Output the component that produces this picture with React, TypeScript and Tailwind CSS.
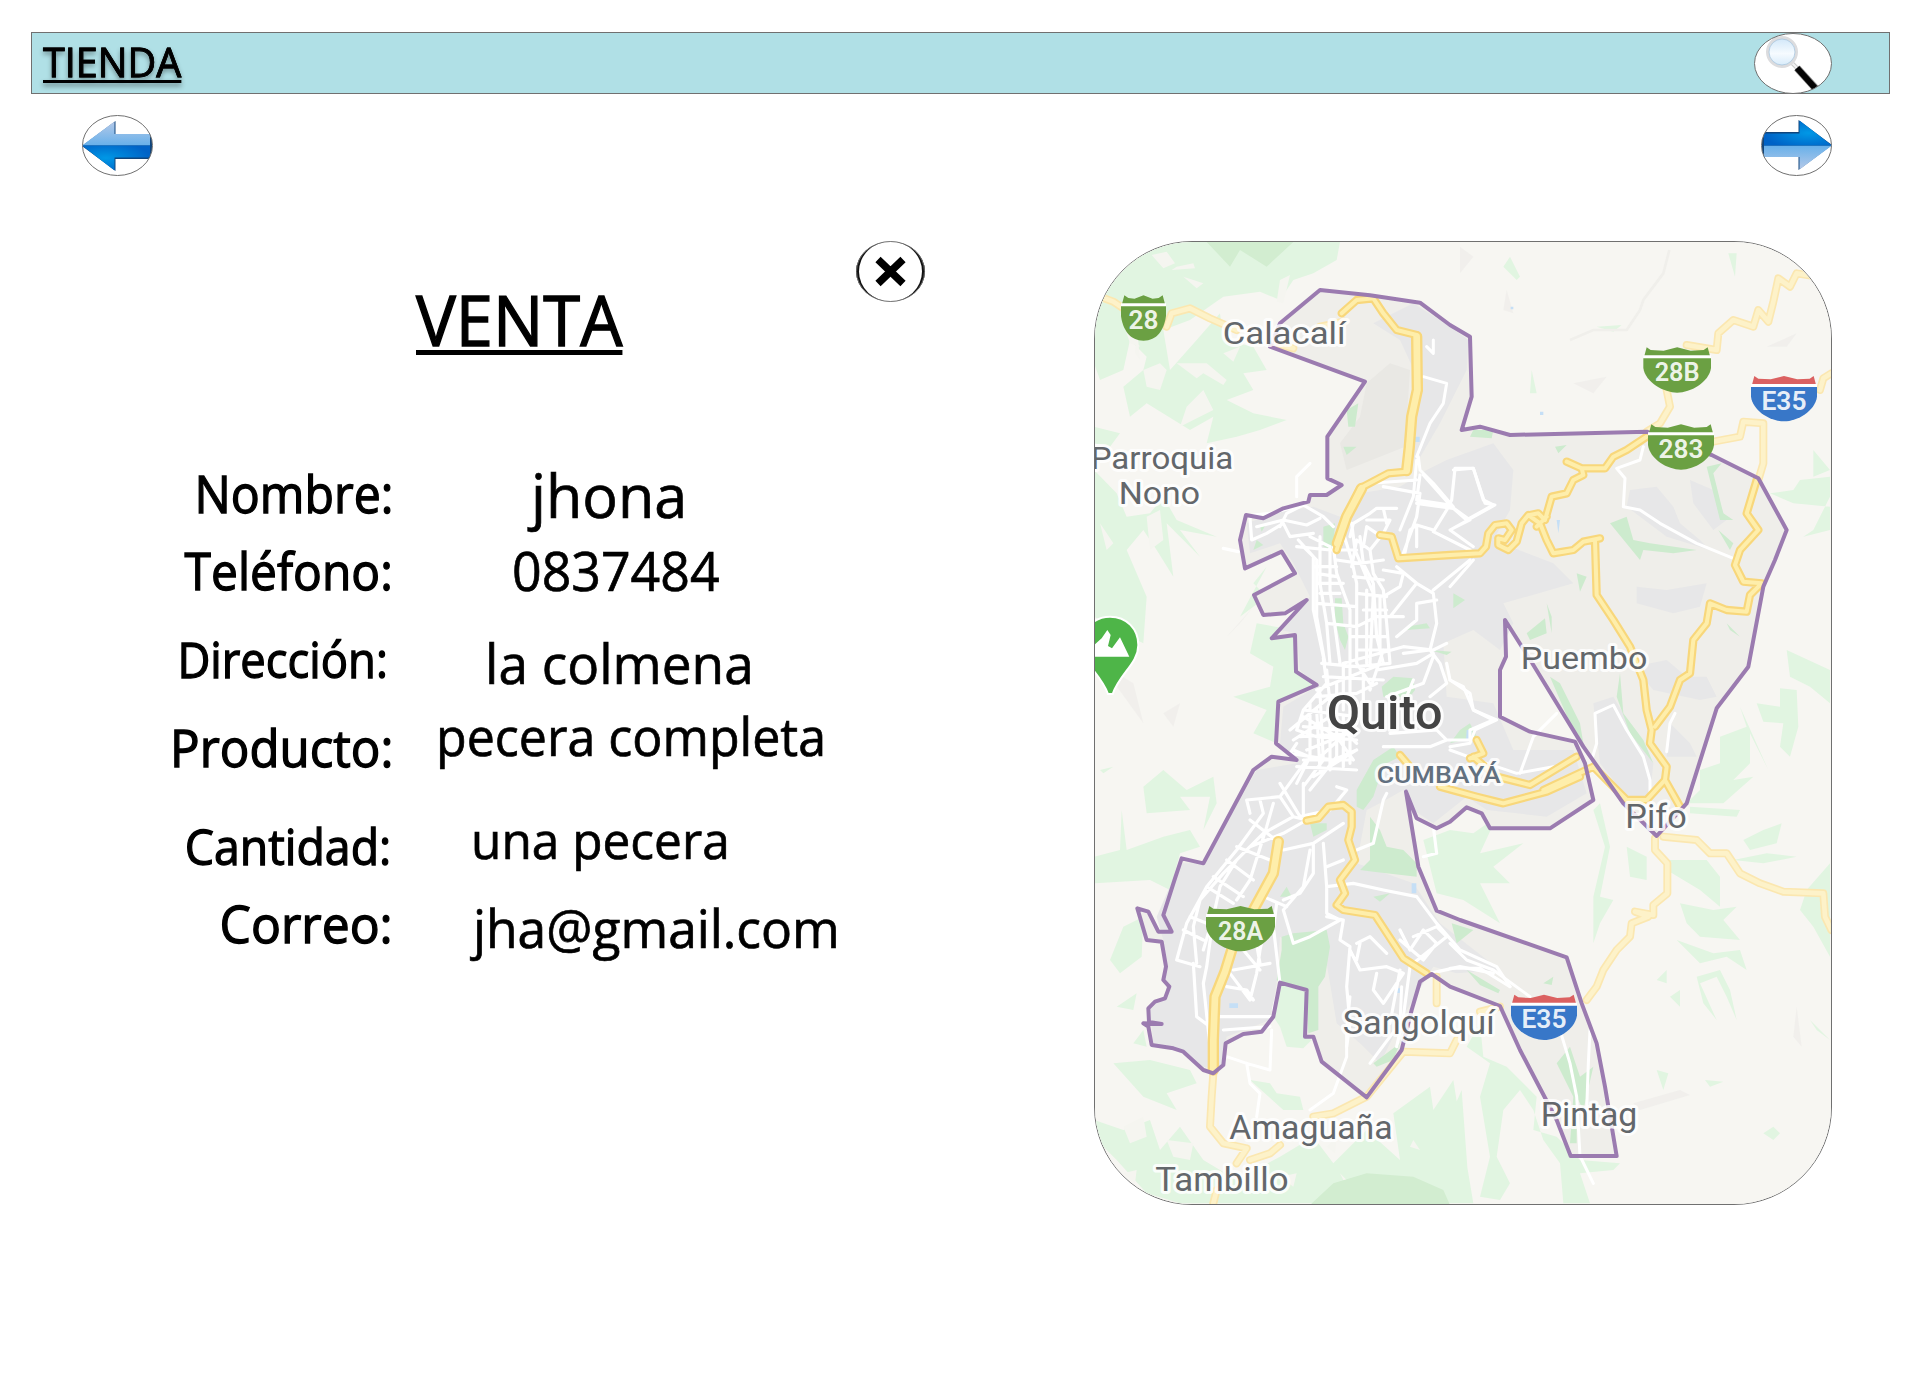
const BOUNDARY =
  'M600 280L720 180L870 196L1020 218L1110 285L1170 320L1175 500L1145 600L1200 590L1290 615L1700 605L1895 675L2035 745L2120 900L2085 990L2050 1070L2005 1310L1910 1435L1820 1720L1730 1818L1630 1720L1510 1550L1360 1305L1275 1170L1278 1280L1260 1320L1260 1460L1350 1505L1485 1535L1515 1600L1540 1710L1410 1795L1230 1795L1205 1750L1160 1732L1110 1775L1070 1795L1010 1765L978 1685L1015 1910L1070 2042L1140 2070L1460 2182L1505 2320L1550 2440L1575 2570L1610 2778L1472 2778L1430 2670L1320 2460L1260 2328L1110 2270L1055 2232L1020 2255L995 2340L965 2460L860 2602L725 2495L700 2420L675 2420L680 2280L600 2258L580 2360L545 2405L490 2412L437 2440L430 2505L400 2530L370 2520L310 2465L280 2455L215 2445L205 2390L190 2380L245 2382L207 2376L205 2335L225 2315L255 2305L268 2270L250 2250L258 2210L245 2135L200 2130L172 2035L205 2045L235 2105L275 2105L250 2055L285 1945L305 1885L370 1900L520 1620L575 1580L650 1590L588 1540L595 1415L710 1365L648 1325L645 1215L575 1225L680 1110L615 1150L550 1155L522 1095L645 1030L605 965L495 1015L480 930L498 855L550 865L610 835L685 815L690 795L740 795L785 765L742 745L742 620L855 455L570 350Z';

const OUTER_GREEN = [
  // north-west hills
  'M130 90L210 60L300 36L640 36L780 36L770 90L700 130L640 150L600 210L540 185L430 200L330 270L250 300L270 420L350 330L420 250L430 330L520 350L560 420L490 430L520 480L440 510L520 550L620 570L540 600L470 620L380 640L400 560L330 600L200 520L150 560L130 470L190 420L200 380L150 330L130 420L60 450L42 400L42 230Z',
  'M42 590L120 610L90 650L42 640Z',
  'M42 720L110 790L140 860L210 850L250 800L290 870L410 920L300 900L360 980L260 880L280 1040L230 960L190 900L140 960L200 1100L190 1240L110 1200L42 1160Z',
  'M520 1060L560 1100L480 1160L560 1010Z',
  'M530 1180L640 1200L660 1320L700 1370L590 1430L590 1540L520 1510L560 1440L460 1400L570 1370L580 1310L510 1270Z',
  'M60 1620L100 1610L70 1630Z',
  'M190 1670L250 1620L320 1680L400 1640L410 1720L370 1800L390 1700L300 1700L330 1740L200 1750Z',
  'M42 1880L120 1860L125 1740L140 1860L250 1820L330 1800L360 1850L300 1870L270 1980L210 1950L42 1960Z',
  'M130 2090L190 2060L185 2180L120 2230L90 2190Z',
  'M110 2330L170 2290L160 2340Z M160 2440L190 2400L200 2450Z',
  'M42 2670L130 2700L210 2670L240 2760L300 2690L370 2790L470 2850L600 2780L700 2720L760 2800L860 2700L960 2790L940 2650L1050 2570L1060 2640L1120 2550L1150 2740L1180 2920L300 2920L200 2890L110 2790L60 2740Z',
  'M100 2500L210 2490L330 2520L350 2560L260 2590L290 2640L190 2600Z',
  'M510 2550L570 2560L590 2590L660 2600L670 2640L610 2640Z',
  // north-east
  'M1290 80L1320 140L1310 150L1270 110Z M1945 70L1970 70L1965 140Z M1550 290L1625 285L1600 305Z M1355 420L1370 490L1350 490Z',
  'M1130 500L1150 480L1155 530Z',
  'M2200 660L2250 720L2200 740Z M2070 790L2140 780L2160 750L2250 740L2250 800L2200 900L2170 920L2250 900L2250 830L2140 820Z',
  // east
  'M2120 1260L2250 1320L2250 1420L2190 1370L2130 1340Z M2030 1420L2100 1430L2100 1375L2150 1380L2155 1490L2130 1580L2100 1550L2110 1480L2050 1475Z',
  'M1920 1520L2000 1490L1980 1430L2065 1620L2010 1510L2010 1560L2010 1600L1960 1650L2020 1640L1930 1720L1820 1720L1860 1680L1860 1620L1920 1600Z M1990 1830L2050 1800L2105 1780L2090 1840L2010 1860Z M1960 1890L2060 1870L2150 1880L2050 1900Z M1830 1730L1980 1740L1970 1760L1830 1750Z',
  'M1770 1890L1880 1890L1920 1940L1920 2030L1860 1980L1760 1920Z M1640 1850L1700 1880L1700 1950L1650 1940Z',
  'M2160 2040L2180 1980L2250 1900L2250 2180L2200 2090Z',
  'M1540 1740L1560 1720L1590 1850L1560 2000L1600 2010L1560 2080L1540 2140L1540 2000L1575 1850Z',
  'M1800 2020L1900 2040L1970 2030L1930 2070L1980 2130L1860 2120L1820 2080Z M1790 2130L1900 2170L1980 2160L2000 2220L1940 2180L1860 2200Z',
  'M1850 2240L1920 2220L1950 2280L1970 2370L1940 2300L1910 2240L1860 2260L1910 2370L1870 2320Z',
  'M1730 2250L1760 2220L1760 2260Z M1770 2300L1800 2280L1800 2330Z M1730 2520L1765 2530L1750 2580Z M1875 2550L1930 2555L1890 2570Z M2050 2710L2080 2690L2100 2710L2080 2730Z',
  'M2190 2370L2250 2430L2210 2400Z',
  // south centre
  'M1110 1800L1180 1810L1250 1760L1200 1870L1330 1840L1240 1910L1290 1960L1200 1960L1260 2080L1150 2010L1070 1990L1030 1830Z',
  'M1160 2450L1200 2380L1210 2480L1280 2510L1370 2600L1360 2700L1430 2720L1500 2790L1620 2800L1600 2820L1500 2830L1530 2920L1450 2920L1440 2800L1390 2730L1360 2640L1320 2580L1270 2640L1250 2780L1290 2860L1260 2910L1200 2900L1230 2780L1200 2600L1230 2500Z',
  'M1110 2660L1145 2580L1170 2920L1110 2900Z',
  'M605 2260L675 2285L675 2420L695 2430L670 2455L620 2450L600 2390L580 2360Z',
];

const CLEARINGS = [
  'M215 75L260 65L285 100L250 115ZM290 110L340 100L345 115L275 120ZM310 140L370 160L350 175ZM600 150L630 135L610 220L590 215ZM190 420L240 400L260 420L240 480L200 470ZM290 400L380 400L440 450L430 465L370 430L350 445ZM370 480L400 540L340 570L300 590L320 530ZM430 370L480 350L460 395ZM170 280L180 390L165 370ZM120 250L180 350L150 340Z',
  'M200 860L240 840L250 930L210 960ZM60 880L100 940L80 960ZM130 2690L190 2660L200 2720L150 2740ZM130 2830L170 2820L165 2860ZM260 2730L340 2740L330 2790L280 2780ZM780 2830L810 2860L790 2850ZM600 2840L650 2830L640 2870ZM1000 2730L1020 2760L990 2750ZM740 2750L770 2720L765 2770Z',
];

const INNER_GREEN = [
  'M605 2160L605 2120L640 2110L740 2100L750 2150L735 2240L715 2270L715 2400L685 2410L680 2280L600 2258L590 2250Z',
  'M880 1590L940 1550L960 1580L920 1600L900 1640L880 1700L850 1740L830 1730L830 1680Z',
  'M905 1370L940 1340L1000 1345L1005 1380L990 1400L910 1400Z',
  'M765 1105L785 1105L790 1180L805 1220L795 1260L780 1230L765 1170Z',
  'M730 890L765 880L760 960L730 950Z M800 540L835 520L825 590L805 590Z M790 650L830 650L800 675Z',
  'M1180 600L1240 600L1235 625L1170 620Z M1425 650L1460 645L1435 670Z M1590 880L1640 860L1660 930L1710 940L1850 960L1780 970L1690 960L1680 990Z',
  'M1880 710L1925 700L1900 730L1930 850L1960 870L1920 870Z M1915 900L1960 940L1950 960Z',
  'M1120 1090L1155 1110L1120 1135Z M1340 1210L1395 1165L1400 1210L1350 1230Z M1490 1030L1520 1040L1500 1085Z M1400 1120L1415 1160L1415 1210Z M1940 1180L1980 1220L1950 1200Z',
  'M1410 1340L1440 1360L1500 1480L1510 1540L1470 1480Z M1620 1330L1630 1450L1690 1530L1720 1600L1650 1510L1610 1400Z',
  'M980 1190L1040 1180L1050 1195L980 1200Z M1050 1260L1115 1265L1100 1275Z M1140 1500L1170 1480L1190 1520L1110 1540Z',
  'M870 1760L900 1800L920 1850L970 1860L1010 1900L1010 1940L880 1925L840 1920L870 1890Z M690 1780L740 1780L740 1800L700 1820Z',
  'M880 2000L930 1990L900 2015Z M1115 2080L1180 2100L1130 2140Z M1160 2220L1260 2280L1255 2290L1200 2265Z M1390 2260L1420 2240L1415 2265Z M1430 2500L1470 2450L1500 2540L1540 2510L1510 2640L1490 2600L1490 2740L1470 2740L1480 2600Z',
  'M880 2500L960 2440L940 2490L890 2510Z M600 2000L620 1970L635 2000Z M540 890L560 880L545 905Z M530 930L550 945L520 960Z',
];

const URBAN = [
  'M500 880L600 845L700 830L780 860L840 790L960 770L1040 720L1100 690L1240 640L1300 720L1290 840L1240 930L1420 1000L1480 1060L1270 1120L1300 1180L1260 1260L1180 1200L1090 1240L1100 1400L1240 1420L1300 1560L1480 1560L1520 1690L1400 1760L1220 1740L1160 1700L1060 1780L1000 1740L970 1680L900 1720L860 1740L830 1900L1000 1960L1080 2080L1260 2220L1130 2230L1060 2210L980 2340L900 2500L840 2440L770 2380L740 2200L600 2120L590 2260L570 2370L440 2420L420 2520L370 2510L300 2460L220 2440L210 2340L260 2290L250 2130L230 2060L300 1900L370 1900L530 1620L650 1600L600 1540L610 1430L710 1370L660 1320L650 1210L600 1200L690 1100L640 1000L600 940L510 970Z',
  'M1000 220L1110 290L1165 330L1160 420L1080 580L1010 700L980 640L990 540L1020 460L960 330L880 280Z',
  'M1650 780L1730 770L1780 830L1800 880L1860 930L1890 960L1760 920L1640 830Z M1830 750L1900 780L1940 870L1900 900L1840 820Z',
  'M1670 1070L1760 1080L1880 1060L1860 1130L1780 1150L1670 1120Z M1660 1310L1760 1290L1820 1340L1880 1340L1910 1400L1860 1410L1720 1380Z',
  'M1540 1420L1600 1400L1720 1600L1710 1700L1640 1700L1560 1600Z M1770 1480L1830 1540L1850 1580L1760 1580Z M1110 1000L1250 980L1260 1080L1130 1100Z',
];

// White street mesh, drawn in its own grid over the urban core.
const STREETS = [
  'M240 205L250 195L300 190L400 165L460 200L490 230M240 205L245 270L290 250L340 220L360 260L430 250M260 230L340 210L410 225L450 205M160 295L205 305M400 165L350 190L330 230',
  'M385 270L430 320L430 480L460 620M400 290L440 330L440 500L465 640M420 260L480 290L480 420L510 640M450 260L450 400L470 520L480 640M490 290L500 370L540 480L540 640M520 250L545 330L560 400L560 640M545 220L555 300L610 430L600 640M500 330L570 340L640 330M430 350L500 350M440 400L520 400M440 460L560 470M470 520L560 530L620 500L700 500M570 260L580 340L610 400L620 560L640 640',
  'M590 210L660 210L640 250L600 300L610 370L640 420L650 520L660 640M540 260L550 220L600 190L620 175L680 175M640 175L650 220M680 350L740 400L790 430L800 520L780 600L700 610M790 420L900 330M740 400L660 500M800 450L740 460L740 510L680 560M520 640L700 590L790 600L830 580',
  'M700 310L740 200L750 130L640 110M750 75L740 150L840 165L760 75M740 160L850 175L890 210L970 165L940 150L910 55L855 55L845 150L830 180L790 245L900 300M700 330L720 240L740 225L790 240M740 230L740 290M640 360L700 370L690 410L640 440M600 300L560 270L545 350M620 250L590 230L580 290',
  'M460 625L470 700L400 780L380 840L440 860L560 870M360 840L480 740M370 870L480 800L560 880M370 900L440 930L560 820M400 800L500 860L550 930M380 880L360 910L490 930L560 900M420 760L420 920L380 1000M450 730L460 930L400 1010M500 700L500 920L420 1020M540 650L540 940M580 650L580 820M380 950L560 960M400 780L560 800M440 720L640 640M460 680L640 690M640 600L600 720M620 660L740 640L790 610',
  'M780 600L810 640L830 700L780 740M830 640L840 690L900 730L910 780L970 810L900 840L900 870L830 870L780 890L640 890M650 740L760 700L790 620M710 740L730 690M660 850L800 840L830 870',
  'M240 1090L230 1050L330 1040L370 1100L410 1110M330 1040L410 930M330 1000L390 1100L480 1080L530 1020L500 1010M400 1000L400 1090M270 1050L280 1090L200 1200L110 1310L50 1420L20 1530L90 1550M410 1110L340 1150L240 1190L160 1270L90 1350L70 1430L80 1540M370 1100L280 1150L200 1230L150 1310L130 1400L110 1550L100 1600L120 1790M310 1060L290 1130L240 1290L200 1350M240 1110L330 1180M200 1190L300 1230M170 1230L250 1290M130 1280L220 1340M110 1310L190 1360M60 1400L110 1420M40 1440L100 1470',
  'M340 1200L430 1180L520 1120M420 1200L400 1310L340 1380L370 1480L420 1460L510 1410L470 1390L470 1310L460 1180M430 1180L430 1270L390 1330L340 1350M470 1310L550 1300L640 1320L740 1340M470 1250L520 1230M470 1400L520 1410L510 1470L540 1490L530 1610L540 1720L530 1790M560 1480L600 1460L650 1510M540 1500L570 1560L650 1550L700 1570L640 1660L610 1620L620 1570M570 1480L560 1530',
  'M690 1440L720 1500L760 1440L800 1480L760 1530L690 1470M730 1460L800 1430L830 1460L730 1540M720 1550L700 1700L680 1790M690 1560L660 1720M740 1340L800 1420L870 1500L980 1550L1020 1610M780 1570L870 1550L970 1570M640 1050L610 1180L560 1200M650 1030L640 1050M790 1130L800 1210L760 1220',
  'M180 1570L240 1650L260 1570L270 1500L290 1410L310 1430L330 1600L310 1680M170 1610L230 1620L250 1650M220 1500L270 1560M150 1700L310 1700M160 1740L300 1730M190 1560L300 1540M130 1400L100 1500M70 1540L80 1700L120 1730M250 1430L270 1540M320 1360L310 1440M280 1340L350 1370',
  'M455 640L560 650L660 640M470 660L480 760M520 640L520 780M560 640L600 700M440 740L560 730L620 700M400 830L520 840M390 860L560 850M410 900L560 840M440 780L450 960M480 780L480 960M520 800L520 950M400 930L540 930M430 980L560 900M380 290L480 300L560 300M440 370L500 380M450 430L510 430M550 380L640 390M560 430L650 440M580 480L650 480M540 560L650 560M560 600L660 600M590 420L590 640M630 440L630 600',
];

const LOCAL_ROADS = [
  'M1120 720L1180 715L1215 820L1245 825L1110 900M1115 830L1170 870L1110 900L1180 950',
  'M1690 650L1680 690L1610 715L1635 745L1630 830L1680 840L1740 880L1850 940L1960 985',
  'M1535 1590L1550 1540L1545 1450L1600 1425L1640 1500L1690 1580L1710 1650L1710 1710M1760 1565L1770 1480L1785 1450',
  'M1110 1350L1150 1370L1180 1440L1250 1470L1185 1500L1170 1540L1110 1550M1320 1630L1360 1520L1430 1450M1250 1610L1310 1630L1420 1610M1110 1560L1220 1600L1200 1630',
  'M1015 680L1020 720L1060 760L1120 830M1030 440L1100 460L1090 520L1050 580L1010 680M1010 690L1000 800L960 900M870 760L1010 750M1040 350L1060 370L1060 330M650 800L650 740L690 700M1110 1070L1180 990',
  'M1110 2140L1160 2190L1240 2220L1350 2300M1110 2215L1200 2215L1290 2270M1440 2400L1470 2500L1490 2600L1500 2778L1540 2860M1530 2400L1525 2500L1520 2640',
  'M440 2480L500 2500L570 2520L575 2400M500 2500L510 2560L540 2590L530 2660M690 2640L760 2590L800 2480L800 2400L810 2300M870 2500L900 2460L960 2380L965 2270',
];

const HIGHWAYS = [
  'M785 250L830 210L880 205L910 250L950 300L1010 315L1015 480L995 560L985 650L980 725L925 730L840 775L800 860L770 960',
  'M900 915L935 920L955 985L1110 975L1200 970L1218 950L1225 910L1245 885L1280 880L1295 900L1275 930L1255 925L1255 945L1285 960L1310 935L1325 880L1345 855L1380 880L1400 930L1420 970L1450 965L1480 960L1510 935L1560 925',
  'M1350 855L1375 850L1395 870L1415 800L1460 790L1480 750L1510 735L1505 715L1460 695M1370 890L1400 860M1505 715L1575 715L1600 680L1640 660L1700 620',
  'M1545 930L1550 1095L1600 1170L1650 1250L1690 1350L1700 1440L1715 1500L1710 1540L1760 1610L1755 1650L1800 1730',
  'M1755 1650L1700 1710L1640 1710L1540 1610M1725 1490L1770 1430L1800 1350L1830 1330L1840 1230L1880 1180L1890 1120L1940 1140L2000 1145L2010 1095L2045 1060L1990 1055L1965 1005L1980 960L2035 900L2000 850L2030 750',
  'M680 1772L715 1765L745 1730L790 1725L815 1745L815 1790L805 1830L825 1890L780 1950L795 1990L770 2025L790 2040L885 2055L970 2185L1040 2230',
  'M1190 1530L1210 1570L1170 1585M1080 1670L1190 1700L1270 1720L1400 1685L1500 1640M1180 1580L1250 1640L1350 1665L1490 1580M1390 1680L1540 1610',
  'M960 1575L990 1610',
];

const TRUNK_ROADS = ['M595 1835L580 1930L520 2040M455 2160L435 2225L405 2300L400 2430L400 2520', 'M1010 320L1012 480L995 560L988 650L980 722', 'M845 775L800 860L772 940'];

const PALE_ROADS = [
  'M60 200L100 215L130 235M260 290L275 250L330 235L390 265L470 300M600 345L640 355M720 290L790 275',
  'M1820 345L1910 360L1915 310L1960 270L2020 290L2035 240L2065 275L2080 215L2095 145L2130 170L2150 130L2210 140M2220 480L2230 445L2254 430M1700 605L1740 580L1770 530L1760 480M1900 635L1980 620L1990 575L2050 580L2050 700L2035 750',
  'M1700 1800L1725 1830M1660 1800L1660 1850L1700 1910M1700 1910L1760 1800M1660 1830L1655 1860L1665 1890L1667 1920L1665 1990L1610 2020',
];

const PALE_SOUTH = [
  'M1725 1825L1725 1860L1762 1900L1762 1990L1720 2025L1720 2055L1665 2045L1705 2060L1655 2080L1650 2120L1610 2160L1570 2220L1550 2270L1520 2310',
  'M1750 1820L1850 1830L1890 1870L1940 1870L1980 1930L2040 1960L2110 1985L2230 1990L2235 2060L2254 2100',
  'M400 2530L395 2600L390 2690L430 2740L500 2755L470 2800M510 2790L570 2770L600 2745M700 2660L760 2650L860 2600L970 2465L1110 2470L1130 2430M1070 2240L1070 2320M410 2880L400 2920M1260 2330L1200 2345',
];

const PALE = [PALE_ROADS[0], PALE_ROADS[1], ...PALE_SOUTH];

type MapText = { t: string; x: number; y: number; w: number; s: number; c?: string; k?: number };
const LABELS: MapText[] = [
  { t: 'Calacalí', x: 428, y: 342, w: 369, s: 96 },
  { t: 'Parroquia', x: 32, y: 716, w: 428, s: 96 },
  { t: 'Nono', x: 116, y: 821, w: 244, s: 96 },
  { t: 'Puembo', x: 1322, y: 1316, w: 380, s: 96 },
  { t: 'Pifo', x: 1636, y: 1795, w: 184, s: 98 },
  { t: 'Sangolquí', x: 788, y: 2411, w: 456, s: 97 },
  { t: 'Amaguaña', x: 448, y: 2728, w: 490, s: 97 },
  { t: 'Tambillo', x: 226, y: 2883, w: 400, s: 97 },
  { t: 'Pintag', x: 1382, y: 2687, w: 290, s: 97 },
  { t: 'CUMBAYÁ', x: 890, y: 1659, w: 372, s: 74, c: '#62707f', k: 500 },
  { t: 'Quito', x: 740, y: 1496, w: 348, s: 146, c: '#444444', k: 500 },
];

function Shield({ x, y, w, text, interstate }: { x: number; y: number; w: number; text: string; interstate?: boolean }) {
  const main = interstate ? '#3877c8' : '#6ba043';
  const top = interstate ? '#db6161' : '#6ba043';
  const m = w / 2;
  return (
    <g transform={`translate(${x} ${y})`}>
      <path d={`M10 0L22 8L${m * 0.6} 10L${m} 0L${m * 1.4} 10L${w - 22} 8L${w - 10} 0L${w - 3} 26H3Z`} fill={top} />
      <path d={`M0 24H${w}V34H0Z`} fill="#fff" />
      <path d={`M0 33H${w}V62C${w - 6} 105 ${m + 40} 136 ${m} 136C${m - 40} 136 6 105 0 62Z`} fill={main} />
      <text x={m} y="101" textAnchor="middle" fontSize="76" fontWeight="600" fill="#fff" fillOpacity=".9" className="font-['Roboto',sans-serif]" textLength={text.length * 45} lengthAdjust="spacingAndGlyphs">
        {text}
      </text>
    </g>
  );
}

function Lines({ paths, color, width }: { paths: string[]; color: string; width: number }) {
  return <path d={paths.join('')} fill="none" stroke={color} strokeWidth={width} strokeLinejoin="round" strokeLinecap="round" />;
}

function QuitoMap() {
  return (
    <svg viewBox="42 33 2214 2892" preserveAspectRatio="none" className="-m-px block h-[964px] w-[738px]">
      <rect x="42" y="33" width="2214" height="2892" fill="#f7f6f2" />
      <path d={OUTER_GREEN.join('')} fill="#e1f5e1" />
      <path d={CLEARINGS.join('')} fill="#f5f5f0" />
      <path d="M380 36H640L560 110L480 60L450 110ZM690 2925L760 2860L860 2830L1000 2840L1090 2880L1110 2925Z" fill="#d2edd0" />
      <path
        d="M1140 50L1180 80L1140 130ZM1280 180L1300 250L1270 240ZM1480 460L1540 490L1580 440L1530 450ZM2150 2330L2165 2450L2140 2420ZM1660 2620L1800 2580L1830 2595L1680 2640ZM2060 350L2150 310L2120 350ZM440 1220L520 1130L480 1180ZM250 1450L300 1420L280 1490ZM60 1300L190 1480L160 1360Z"
        fill="#eeedea"
        opacity=".7"
      />
      <path d="M1470 330L1540 300L1640 300L1680 240L1690 210L1750 130L1768 60" fill="none" stroke="#f0efeb" strokeWidth="8" />
      <path d={BOUNDARY} fill="#efeeea" />
      <path d="M860 460L930 400L990 420L975 650L900 680L800 720L780 640L840 560Z" fill="#e9e8e4" />
      <path d={URBAN.join('')} fill="#e7e7e8" />
      <path d={INNER_GREEN.join('')} fill="#cdebce" />
      <path d="M1005 620h14v16h-14zM448 2320h26v14h-26zM1430 870h10l-5 40zM1160 1500h16l-6 30h-12zM995 1960h14v30h-14zM948 2275h14v14h-14zM1292 230h8v8h-8zM1380 545h10v10h-10z" fill="#c5dff6" />
      <Lines paths={LOCAL_ROADS} color="#ffffff" width={9} />
      <g transform="translate(270 660)">
        <Lines paths={STREETS} color="#ffffff" width={9.5} />
      </g>
      <Lines paths={PALE} color="#fbe7b0" width={24} />
      <Lines paths={PALE} color="#fdf2c9" width={14} />
      <Lines paths={HIGHWAYS} color="#f8d77b" width={25} />
      <Lines paths={TRUNK_ROADS} color="#f8d77b" width={34} />
      <Lines paths={HIGHWAYS} color="#feeeab" width={12} />
      <Lines paths={TRUNK_ROADS} color="#feeeab" width={20} />
      <path d={BOUNDARY} fill="none" stroke="#9b7bb0" strokeWidth="12" strokeLinejoin="round" />
      <path d="M90 1160C140 1160 175 1197 175 1245C175 1300 120 1330 98 1392H84C62 1330 5 1300 5 1245C5 1197 42 1160 90 1160Z" fill="#4eb548" stroke="#fff" strokeWidth="6" />
      <path d="M42 1280V1245L65 1225L82 1200L92 1215L84 1248L96 1255L120 1222L148 1280Z" fill="#fff" />
      <g className="font-['Roboto',sans-serif]">
        {LABELS.map((l) => (
          <text
            key={l.t}
            x={l.x}
            y={l.y}
            fontSize={l.s}
            fill={l.c ?? '#63676b'}
            fontWeight={l.k ?? 400}
            textLength={l.w}
            lengthAdjust="spacingAndGlyphs"
            stroke="#fff"
            strokeOpacity=".85"
            strokeWidth="18"
            strokeLinejoin="round"
            paintOrder="stroke"
          >
            {l.t}
          </text>
        ))}
      </g>
      <Shield x={123} y={196} w={135} text="28" />
      <Shield x={1690} y={352} w={203} text="28B" />
      <Shield x={1704} y={583} w={198} text="283" />
      <Shield x={2013} y={438} w={198} text="E35" interstate />
      <Shield x={378} y={2028} w={207} text="28A" />
      <Shield x={1293} y={2294} w={198} text="E35" interstate />
    </svg>
  );
}

function Arrow({ right }: { right?: boolean }) {
  return (
    <svg viewBox="0 0 71 61" className={right ? 'h-[61px] w-[71px] rotate-180' : 'h-[61px] w-[71px]'}>
      <defs>
        <linearGradient id="sky" x1="0" y1="0" x2="0" y2="1">
          <stop offset="0" stopColor="#b5c9e8" />
          <stop offset="1" stopColor="#67b0ea" />
        </linearGradient>
        <radialGradient id="deep" cx=".35" cy=".5" r=".65">
          <stop offset="0" stopColor="#0098e6" />
          <stop offset="1" stopColor="#0062c6" />
        </radialGradient>
        <clipPath id="oval">
          <ellipse cx="35.5" cy="30.5" rx="35" ry="30" />
        </clipPath>
      </defs>
      <ellipse cx="35.5" cy="30.5" rx="35" ry="30" fill="#fff" />
      <g clipPath="url(#oval)">
        <path d="M0 31L33.5 6V19H70V44H33.5V56Z" fill="#10457c" />
        <path d="M0 30.500L32.500 6.500V19H68V30.500Z" fill="url(#sky)" />
        <path d="M0 30.500H68V42.500H32.500V55.500Z" fill="url(#deep)" />
      </g>
      <ellipse cx="35.5" cy="30.5" rx="35" ry="30" fill="none" stroke="#707070" />
    </svg>
  );
}

function Magnifier() {
  return (
    <svg viewBox="0 0 78 61" className="h-[61px] w-[78px]">
      <defs>
        <linearGradient id="glass" x1="0" y1="0" x2="0" y2="1">
          <stop offset="0" stopColor="#cfe6f8" />
          <stop offset=".55" stopColor="#f6fbff" />
          <stop offset="1" stopColor="#d5eafa" />
        </linearGradient>
        <clipPath id="lens">
          <ellipse cx="39" cy="30.5" rx="38.500" ry="30" />
        </clipPath>
      </defs>
      <ellipse cx="39" cy="30.5" rx="38.500" ry="30" fill="#fff" />
      <g clipPath="url(#lens)">
        <path d="M37 29L44 36" stroke="#c9c9c9" strokeWidth="4" />
        <path d="M37 29L44 36" stroke="#f2f2f2" strokeWidth="2" />
        <path d="M43 35L64 58" stroke="#8a8a8a" strokeWidth="7.500" />
        <path d="M43 35L61 55" stroke="#050505" strokeWidth="6" />
        <circle cx="28" cy="19" r="14.500" fill="url(#glass)" stroke="#dcdcde" strokeWidth="3" />
        <circle cx="28" cy="19" r="13" fill="none" stroke="#a9c6de" strokeWidth=".8" />
      </g>
      <ellipse cx="39" cy="30.5" rx="38.500" ry="30" fill="none" stroke="#707070" />
    </svg>
  );
}

function CloseIcon() {
  return (
    <svg viewBox="0 0 70 61" className="h-[61px] w-[70px]">
      <ellipse cx="34.500" cy="30.500" rx="34.500" ry="30" fill="#111" />
      <ellipse cx="34.500" cy="30.500" rx="31.500" ry="30" fill="#fff" />
      <ellipse cx="34.500" cy="30.500" rx="34" ry="30" fill="none" stroke="#707070" strokeWidth=".9" />
      <path d="M22 18.500L47 42.500M47 18.500L22 42.500" stroke="#000" strokeWidth="7.500" />
    </svg>
  );
}

const FIELD_LABELS = [
  { text: 'Nombre:', style: 'text-[51px] scale-x-[.945]' },
  { text: 'Teléfono:', style: 'mt-[17px] text-[52px] scale-x-[.922]' },
  { text: 'Dirección:', style: 'mt-[29px] mr-[5px] text-[48.5px] scale-x-[.936]' },
  { text: 'Producto:', style: 'mt-[28px] text-[51px] scale-x-[.965]' },
  { text: 'Cantidad:', style: 'mt-[39px] mr-[2px] text-[49.5px] scale-x-[.938]' },
  { text: 'Correo:', style: 'mt-[17px] text-[52px] scale-x-[.958]' },
];

const FIELD_VALUES = [
  { text: 'jhona', style: 'mt-[2px] ml-[95px] text-[60px] scale-x-[.987]' },
  { text: '0837484', style: 'mt-[15px] ml-[76px] text-[54.6px] scale-x-[.95]' },
  { text: 'la colmena', style: 'mt-[32px] ml-[49px] text-[55.7px] scale-x-[.954]' },
  { text: 'pecera completa', style: 'mt-[14px] text-[52.6px] scale-x-[.953]' },
  { text: 'una pecera', style: 'mt-[43px] ml-[35px] text-[52px] scale-x-[.953]' },
  { text: 'jha@gmail.com', style: 'mt-[29px] ml-[37px] text-[52.6px] scale-x-[.98]' },
];

export default function App() {
  return (
    <main className="h-[1396px] w-[1920px] overflow-hidden bg-white font-['Open_Sans','Noto_Sans',sans-serif] text-black">
      <div className="pt-8 pr-[30px] pl-[31px]">
        <header className="flex h-[62px] items-center justify-between border border-[#707070] bg-[#b0e0e6] pr-[57px] pl-[11px]">
          <h1 className="-mt-[5px] origin-left scale-x-[.965] text-[41px] leading-[60px] underline decoration-[3px] underline-offset-[3px] [-webkit-text-stroke:.8px_black] [text-decoration-skip-ink:none] [text-shadow:0_3px_5px_rgba(0,0,0,.45)]">
            TIENDA
          </h1>
          <Magnifier />
        </header>
      </div>

      <nav className="mt-[21px] flex justify-between pr-[88px] pl-[82px]">
        <Arrow />
        <Arrow right />
      </nav>

      <div className="mt-[65px] flex items-start justify-between pr-[88px]">
        <section className="w-[926px]">
          <div className="flex h-[222px] items-start justify-between pl-[416px]">
            <h2 className="mt-[38px] origin-left scale-x-[.955] text-[70px] leading-[80px] underline decoration-[5px] underline-offset-[4px] [-webkit-text-stroke:1.4px_black] [text-decoration-skip-ink:none]">
              VENTA
            </h2>
            <CloseIcon />
          </div>
          <div className="flex">
            <div className="flex w-[393px] flex-col items-end whitespace-nowrap [-webkit-text-stroke:1.3px_black]">
              {FIELD_LABELS.map((f) => (
                <span key={f.text} className={`h-[60px] origin-right leading-[60px] ${f.style}`}>
                  {f.text}
                </span>
              ))}
            </div>
            <div className="ml-[43px] flex flex-col items-start whitespace-nowrap [-webkit-text-stroke:.7px_black]">
              {FIELD_VALUES.map((f) => (
                <span key={f.text} className={`h-[60px] origin-left leading-[60px] ${f.style}`}>
                  {f.text}
                </span>
              ))}
            </div>
          </div>
        </section>

        <div className="h-[964px] w-[738px] overflow-hidden rounded-[98px] border border-[#707070]">
          <QuitoMap />
        </div>
      </div>
    </main>
  );
}
